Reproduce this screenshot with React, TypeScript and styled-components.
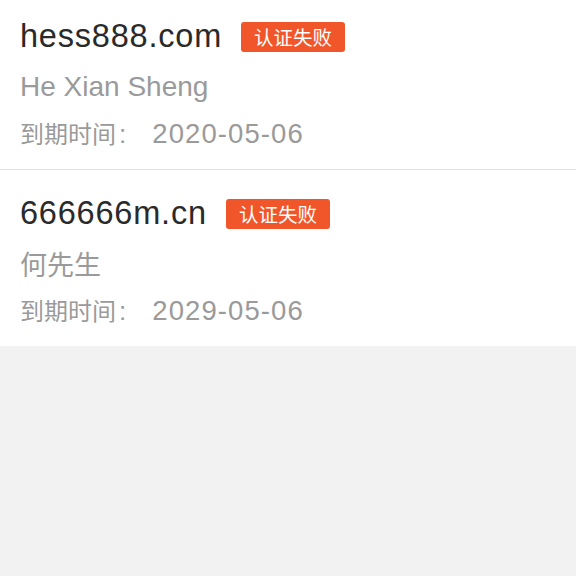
import styled, { createGlobalStyle } from 'styled-components';

const GlobalStyle = createGlobalStyle`
  html, body {
    margin: 0;
    padding: 0;
    background: #f2f2f2;
    font-family: 'Liberation Sans', Arial, 'Noto Sans CJK SC', sans-serif;
  }
`;

const PageStyled = styled.div`
  width: 576px;
  height: 576px;
  overflow: hidden;
  background: #f2f2f2;
`;

// the list is scrolled a little in the screenshot
const ListStyled = styled.div`
  margin-top: -7px;
  background: #fff;
`;

const CardStyled = styled.div`
  box-sizing: border-box;
  height: 177px;
  padding: 21px 20px 0;
  border-bottom: 1px solid #e2e2e2;

  &:last-child {
    height: 176px;
    border-bottom: none;
  }
`;

const TitleRow = styled.div`
  display: flex;
  align-items: center;
  height: 44px;
`;

const Domain = styled.span`
  font-size: 32.5px;
  line-height: 44px;
  color: #2a2a2a;
  letter-spacing: 0.8px;
`;

const Badge = styled.span<{ $color?: string }>`
  display: inline-flex;
  align-items: center;
  justify-content: center;
  box-sizing: border-box;
  height: 30px;
  width: 104px;
  margin-left: 19px;
  margin-top: 2px;
  border-radius: 3px;
  background: ${(p) => p.$color || '#f1562a'};
  color: #fff;
  font-family: 'Noto Sans CJK SC', sans-serif;
  font-size: 19.5px;
  line-height: 30px;
`;

const Owner = styled.div<{ $cjk?: boolean }>`
  margin-top: 9px;
  height: 40px;
  font-size: ${(p) => (p.$cjk ? '27px' : '28px')};
  line-height: 40px;
  color: #9a9a9a;
  font-family: ${(p) =>
    p.$cjk
      ? "'Noto Sans CJK SC', sans-serif"
      : "'Liberation Sans', Arial, sans-serif"};
`;

const DateRow = styled.div`
  display: flex;
  align-items: baseline;
  margin-top: 6px;
  height: 40px;
  line-height: 40px;
  color: #9a9a9a;
`;

const DateLabel = styled.span`
  font-family: 'Noto Sans CJK SC', sans-serif;
  font-size: 24px;
`;

const Colon = styled.span`
  font-size: 26px;
  margin-left: 3px;
`;

const DateValue = styled.span`
  font-size: 27.5px;
  margin-left: 26px;
  letter-spacing: 1.1px;
`;

type Domain = {
  name: string;
  owner: string;
  cjkOwner?: boolean;
  status: string;
  expires: string;
};

const domains: Domain[] = [
  { name: 'hess888.com', owner: 'He Xian Sheng', status: '认证失败', expires: '2020-05-06' },
  { name: '666666m.cn', owner: '何先生', cjkOwner: true, status: '认证失败', expires: '2029-05-06' },
];

const App = () => {
  return (
    <PageStyled>
      <GlobalStyle />
      <ListStyled>
        {domains.map((item) => (
          <CardStyled key={item.name}>
            <TitleRow>
              <Domain>{item.name}</Domain>
              <Badge>{item.status}</Badge>
            </TitleRow>
            <Owner $cjk={item.cjkOwner}>{item.owner}</Owner>
            <DateRow>
              <DateLabel>到期时间</DateLabel>
              <Colon>:</Colon>
              <DateValue>{item.expires}</DateValue>
            </DateRow>
          </CardStyled>
        ))}
      </ListStyled>
    </PageStyled>
  );
};

export default App;
